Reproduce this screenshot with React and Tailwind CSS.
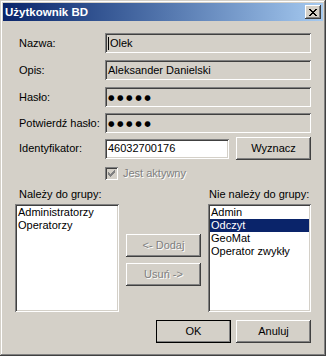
import { useState } from "react";

const sunken =
  "shadow-[inset_1px_1px_#808080,inset_-1px_-1px_#ffffff,inset_2px_2px_#404040,inset_-2px_-2px_#d4d0c8]";
const raised =
  "shadow-[inset_-1px_-1px_#404040,inset_1px_1px_#ffffff,inset_-2px_-2px_#808080,inset_2px_2px_#d4d0c8]";
const font = "font-['Liberation_Sans',Arial,sans-serif] text-[11px] leading-[13px]";

function Field({ label, children, white, className = "" }) {
  return (
    <div className={`flex h-[20px] items-center ${className}`}>
      <span className="w-[90px] shrink-0 pl-[4px] text-black">{label}</span>
      <div
        className={`flex h-full flex-1 items-center pl-[3px] ${sunken} ${white ? "bg-white" : "bg-[#d4d0c8]"}`}
      >
        {children}
      </div>
    </div>
  );
}

function Dots() {
  return (
    <span className="font-['DejaVu_Sans',sans-serif] text-[7.5px] tracking-[2.5px] text-black">
      ●●●●●
    </span>
  );
}

function Btn({ children, disabled, def, className = "" }) {
  return (
    <button
      type="button"
      className={`flex h-[23px] w-[75px] items-center justify-center bg-[#d4d0c8] ${raised} ${
        def ? "outline outline-1 -outline-offset-1 outline-black" : ""
      } ${disabled ? "text-[#808080] [text-shadow:1px_1px_0_#ffffff]" : "text-black"} ${className}`}
    >
      {children}
    </button>
  );
}

function ListBox({ items, selected, className = "" }) {
  return (
    <div className={`h-[108px] bg-white p-[2px] ${sunken} ${className}`}>
      {items.map((it) => (
        <div
          key={it}
          className={`h-[13px] pl-[1px] ${it === selected ? "bg-[#0a246a] text-white" : "text-black"}`}
        >
          {it}
        </div>
      ))}
    </div>
  );
}

export default function App() {
  const [sel] = useState("Odczyt");
  return (
    <div
      className={`flex h-[356px] w-[326px] flex-col bg-[#d4d0c8] p-[3px] ${font} shadow-[inset_-1px_-1px_#404040,inset_1px_1px_#d4d0c8,inset_-2px_-2px_#808080,inset_2px_2px_#ffffff]`}
    >
      {/* title bar */}
      <div className="flex h-[18px] shrink-0 items-center justify-between bg-gradient-to-r from-[#0a246a] to-[#a6caf0] pl-[2px] pr-[2px]">
        <span className="text-[11.5px] font-bold text-white">Użytkownik BD</span>
        <div className={`flex h-[14px] w-[16px] items-center justify-center bg-[#d4d0c8] ${raised}`}>
          <svg width="8" height="7" viewBox="0 0 8 7" shapeRendering="crispEdges">
            <path
              d="M0 0h2v1h-2zM6 0h2v1h-2zM1 1h2v1h-2zM5 1h2v1h-2zM2 2h4v1h-4zM3 3h2v1h-2zM2 4h4v1h-4zM1 5h2v1h-2zM5 5h2v1h-2zM0 6h2v1h-2zM6 6h2v1h-2z"
              fill="#000"
            />
          </svg>
        </div>
      </div>

      <div className="flex flex-1 flex-col px-[12px] pt-[12px]">
        <Field label="Nazwa:">
          <span className="mr-[1px] h-[13px] w-[1px] bg-black" />
          <span>Olek</span>
        </Field>
        <Field label="Opis:" className="mt-[7px]">
          <span>Aleksander Danielski</span>
        </Field>
        <Field label="Hasło:" className="mt-[7px]">
          <Dots />
        </Field>
        <Field label="Potwierdź hasło:" className="mt-[6px]">
          <Dots />
        </Field>

        <div className="mt-[5px] flex h-[21px] items-center">
          <span className="w-[90px] shrink-0 pl-[4px]">Identyfikator:</span>
          <div className={`flex h-[20px] w-[124px] items-center bg-white pl-[3px] ${sunken}`}>
            46032700176
          </div>
          <Btn className="ml-auto h-[21px] w-[74px]">Wyznacz</Btn>
        </div>

        <div className="mt-[8px] flex h-[13px] items-center pl-[90px]">
          <div className={`flex h-[13px] w-[13px] items-center justify-center bg-[#d4d0c8] ${sunken}`}>
            <svg width="7" height="7" viewBox="0 0 7 7" shapeRendering="crispEdges">
              <path d="M6 0h1v3h-1zM5 1h1v3h-1zM4 2h1v3h-1zM3 3h1v3h-1zM2 4h1v3h-1zM1 3h1v3h-1zM0 2h1v3h-1z" fill="#808080" />
            </svg>
          </div>
          <span className="ml-[5px] text-[#808080] [text-shadow:1px_1px_0_#ffffff]">Jest aktywny</span>
        </div>

        <div className="mt-[8px] flex h-[13px]">
          <span className="w-[194px] shrink-0 pl-[4px]">Należy do grupy:</span>
          <span>Nie należy do grupy:</span>
        </div>

        <div className="mt-[3px] flex">
          <ListBox items={["Administratorzy", "Operatorzy"]} className="w-[104px]" />
          <div className="mx-[7px] flex flex-col pt-[30px]">
            <Btn disabled>&lt;- Dodaj</Btn>
            <Btn disabled className="mt-[6px]">
              Usuń -&gt;
            </Btn>
          </div>
          <ListBox
            items={["Admin", "Odczyt", "GeoMat", "Operator zwykły"]}
            selected={sel}
            className="w-[103px]"
          />
        </div>

        <div className="mt-[8px] flex justify-end gap-[5px]">
          <Btn def>OK</Btn>
          <Btn>Anuluj</Btn>
        </div>
      </div>
    </div>
  );
}
